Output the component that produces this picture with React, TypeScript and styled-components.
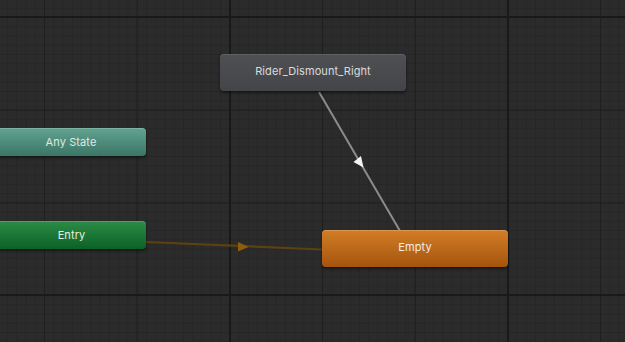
import styled, { createGlobalStyle } from "styled-components";

type Variant = "default" | "any" | "entry" | "empty";

type StateBox = {
  id: string;
  label: string;
  variant: Variant;
  x: number;
  y: number;
  w: number;
  h: number;
};

// node positions are the content of the canvas, so they live in data
const states: StateBox[] = [
  { id: "rider", label: "Rider_Dismount_Right", variant: "default", x: 220, y: 54, w: 186, h: 37 },
  { id: "any", label: "Any State", variant: "any", x: -4, y: 128, w: 150, h: 28 },
  { id: "entry", label: "Entry", variant: "entry", x: -3, y: 221, w: 149, h: 28 },
  { id: "empty", label: "Empty", variant: "empty", x: 322, y: 230, w: 186, h: 37 },
];

const GlobalStyle = createGlobalStyle`
  html, body {
    margin: 0;
    padding: 0;
    background: #2a2a2a;
    overflow: hidden;
  }
  * { box-sizing: border-box; }
`;

const Canvas = styled.main`
  position: relative;
  width: 625px;
  height: 342px;
  overflow: hidden;
  background-color: #2b2b2b;
  background-image:
    linear-gradient(to right, #191919 0 2px, transparent 2px),
    linear-gradient(to bottom, #191919 0 2px, transparent 2px),
    linear-gradient(to right, #1f1f1f 0 1px, transparent 1px),
    linear-gradient(to bottom, #1f1f1f 0 1px, transparent 1px),
    linear-gradient(to right, #262626 0 1px, transparent 1px),
    linear-gradient(to bottom, #262626 0 1px, transparent 1px);
  background-size:
    278.1px 100%,
    100% 278.1px,
    92.7px 100%,
    100% 92.7px,
    9.27px 100%,
    100% 9.27px;
  background-position:
    229px 0,
    0 16px,
    44px 0,
    0 17px,
    44px 0,
    0 17px;
`;

const palette: Record<Variant, { top: string; bottom: string; text: string; edge: string }> = {
  default: { top: "#4f5054", bottom: "#444549", text: "#dadada", edge: "rgba(255,255,255,0.10)" },
  any: { top: "#62a390", bottom: "#3b7565", text: "#dfe9e5", edge: "rgba(255,255,255,0.18)" },
  entry: { top: "#2c8c47", bottom: "#0b6226", text: "#e3efe6", edge: "rgba(255,255,255,0.18)" },
  empty: { top: "#d27d27", bottom: "#a4540d", text: "#f4ebe2", edge: "rgba(255,255,255,0.20)" },
};

const StateNode = styled.div<{ $variant: Variant; $tall: boolean }>`
  position: absolute;
  display: flex;
  align-items: center;
  justify-content: center;
  padding-bottom: ${(p) => (p.$tall ? "4px" : "0")};
  border-radius: 4px;
  font-family: Inter, "Noto Sans", sans-serif;
  font-size: 11px;
  letter-spacing: 0.1px;
  color: ${(p) => palette[p.$variant].text};
  background: linear-gradient(
    to bottom,
    ${(p) => palette[p.$variant].top},
    ${(p) => palette[p.$variant].bottom}
  );
  box-shadow:
    inset 0 1px 0 ${(p) => palette[p.$variant].edge},
    0 2px 3px rgba(0, 0, 0, 0.45);
  white-space: nowrap;
`;

const Links = styled.svg`
  position: absolute;
  inset: 0;
  width: 625px;
  height: 342px;
`;

export default function App() {
  return (
    <>
      <GlobalStyle />
      <Canvas>
        <Links viewBox="0 0 625 342">
          <line x1="146" y1="242" x2="322" y2="249.5" stroke="#5c4210" strokeWidth="2.2" />
          <polygon points="238,242 238,251.5 248.5,247" fill="#8d5f0c" />
          <line x1="319" y1="92" x2="400" y2="231" stroke="#8c8c8c" strokeWidth="2" />
          <polygon points="353.5,162 361,156 363.5,167.5" fill="#f4f4f4" />
        </Links>
        {states.map((s) => (
          <StateNode
            key={s.id}
            $variant={s.variant}
            $tall={s.h > 32}
            style={{ left: s.x, top: s.y, width: s.w, height: s.h }}
          >
            {s.label}
          </StateNode>
        ))}
      </Canvas>
    </>
  );
}
